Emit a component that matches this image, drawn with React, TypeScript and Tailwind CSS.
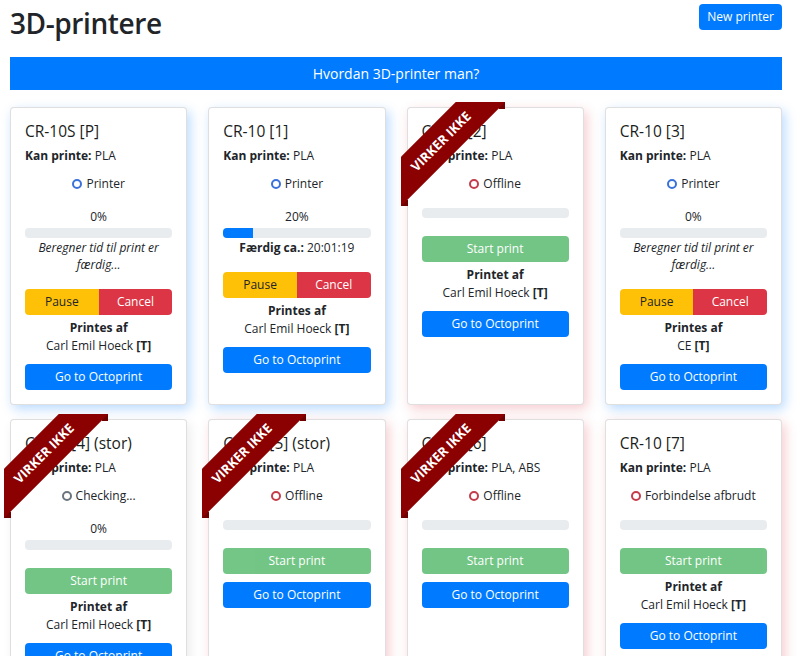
import React from 'react';

type Status = 'printer' | 'offline' | 'checking' | 'lost';

interface Printer {
    name: string;
    materials: string;
    status: Status;
    broken?: boolean;
    progress?: number;
    printing?: boolean;
    eta?: string;
    printedBy?: string;
    glow: 'blue' | 'red' | 'gray';
}

const printers: Printer[] = [
    { name: 'CR-10S [P]', materials: 'PLA', status: 'printer', progress: 0, printing: true, printedBy: 'Carl Emil Hoeck', glow: 'blue' },
    { name: 'CR-10 [1]', materials: 'PLA', status: 'printer', progress: 20, printing: true, eta: '20:01:19', printedBy: 'Carl Emil Hoeck', glow: 'blue' },
    { name: 'CR-10 [2]', materials: 'PLA', status: 'offline', broken: true, printedBy: 'Carl Emil Hoeck', glow: 'red' },
    { name: 'CR-10 [3]', materials: 'PLA', status: 'printer', progress: 0, printing: true, printedBy: 'CE', glow: 'blue' },
    { name: 'CR-10 [4] (stor)', materials: 'PLA', status: 'checking', broken: true, progress: 0, printedBy: 'Carl Emil Hoeck', glow: 'gray' },
    { name: 'CR-10 [5] (stor)', materials: 'PLA', status: 'offline', broken: true, glow: 'red' },
    { name: 'CR-10 [6]', materials: 'PLA, ABS', status: 'offline', broken: true, glow: 'red' },
    { name: 'CR-10 [7]', materials: 'PLA', status: 'lost', printedBy: 'Carl Emil Hoeck', glow: 'red' },
];

const statusInfo: Record<Status, { label: string; ring: string }> = {
    printer: { label: 'Printer', ring: 'border-[#3b72d9]' },
    offline: { label: 'Offline', ring: 'border-[#c43d4b]' },
    checking: { label: 'Checking...', ring: 'border-[#6c757d]' },
    lost: { label: 'Forbindelse afbrudt', ring: 'border-[#c43d4b]' },
};

const glowClass = {
    blue: 'shadow-[3px_4px_12px_rgba(0,123,255,0.28)]',
    red: 'shadow-[3px_4px_12px_rgba(220,53,69,0.25)]',
    gray: 'shadow-[3px_4px_12px_rgba(0,0,0,0.08)]',
};

const Ribbon: React.FC = () => (
    <div className="absolute -top-[6px] -left-[7px] w-[104px] h-[104px] overflow-hidden pointer-events-none z-10">
        <div className="absolute top-0 right-0 w-[6px] h-[7px] bg-[#6e0000]" />
        <div className="absolute bottom-0 left-0 w-[7px] h-[6px] bg-[#6e0000]" />
        <div className="absolute left-[-35px] top-[22px] w-[150px] h-[35px] bg-[#8b0000] -rotate-45 flex items-center justify-center text-white font-bold text-[13px] uppercase">
            Virker ikke
        </div>
    </div>
);

const PrinterCard: React.FC<{ p: Printer }> = ({ p }) => {
    const st = statusInfo[p.status];
    return (
        <div className={`relative bg-white border border-[rgba(0,0,0,0.125)] rounded-[4px] px-[14px] pt-[14px] pb-[14px] ${glowClass[p.glow]}`}>
            {p.broken && <Ribbon />}
            <div className="text-[15.5px] leading-[18px] font-medium text-[#1a1d20]">{p.name}</div>
            <div className="mt-[7px] leading-[18px]">
                <span className="font-bold">Kan printe:</span> {p.materials}
            </div>
            <div className="mt-[10px] leading-[18px] text-center flex items-center justify-center">
                <span className={`inline-block w-[10px] h-[10px] rounded-full border-2 mr-[4px] ${st.ring}`} />
                {st.label}
            </div>

            {p.progress !== undefined ? (
                <div className="mt-[15px] leading-[18px] text-center">{p.progress}%</div>
            ) : null}
            <div className={`${p.progress !== undefined ? 'mt-[2px]' : 'mt-[15px]'} h-[10px] rounded-[4px] bg-[#e9ecef] overflow-hidden`}>
                {p.progress ? <div className="h-full bg-[#007bff]" style={{ width: `${p.progress}%` }} /> : null}
            </div>

            {p.printing && (
                p.eta ? (
                    <div className="leading-[18px] text-center mt-[1px]">
                        <span className="font-bold">Færdig ca.:</span> {p.eta}
                    </div>
                ) : (
                    <div className="leading-[17px] text-center italic px-[8px] mt-[1px]">Beregner tid til print er færdig...</div>
                )
            )}

            {p.printing ? (
                <div className={`${p.eta ? 'mt-[15px]' : 'mt-[16px]'} flex h-[26px] rounded-[4px] overflow-hidden`}>
                    <div className="flex-1 bg-[#ffc107] text-[#212529] flex items-center justify-center">Pause</div>
                    <div className="flex-1 bg-[#dc3545] text-white flex items-center justify-center">Cancel</div>
                </div>
            ) : (
                <div className="mt-[18px] h-[26px] rounded-[4px] bg-[#28a745] opacity-65 text-white flex items-center justify-center">Start print</div>
            )}

            {p.printedBy && (
                <div className="mt-[4px] text-center leading-[18px]">
                    <div className="font-bold">{p.printing ? 'Printes af' : 'Printet af'}</div>
                    <div>{p.printedBy} <span className="font-bold">[T]</span></div>
                </div>
            )}

            <div className={`${p.printedBy ? 'mt-[9px]' : 'mt-[8px]'} h-[26px] rounded-[4px] bg-[#007bff] text-white flex items-center justify-center`}>
                Go to Octoprint
            </div>
        </div>
    );
};

export default function App() {
    return (
        <div className="min-h-screen bg-white text-[#212529] text-[12px]" style={{ fontFamily: '"Open Sans", "Noto Sans", sans-serif' }}>
            <div className="w-[772px] ml-[10px] pb-[20px]">
                <div className="flex items-start justify-between">
                    <h1 className="text-[28px] leading-[44px] font-semibold mt-[1px] tracking-[-0.4px]">3D-printere</h1>
                    <button className="mt-[4px] h-[26px] px-[8px] rounded-[4px] bg-[#007bff] text-white text-[12px]">New printer</button>
                </div>
                <div className="mt-[12px] h-[33px] bg-[#007bff] text-white text-[14px] flex items-center justify-center">
                    Hvordan 3D-printer man?
                </div>
                <div className="mt-[17px] grid grid-cols-4 gap-x-[21px] gap-y-[14px]">
                    {printers.map(p => <PrinterCard key={p.name} p={p} />)}
                </div>
            </div>
        </div>
    );
}
